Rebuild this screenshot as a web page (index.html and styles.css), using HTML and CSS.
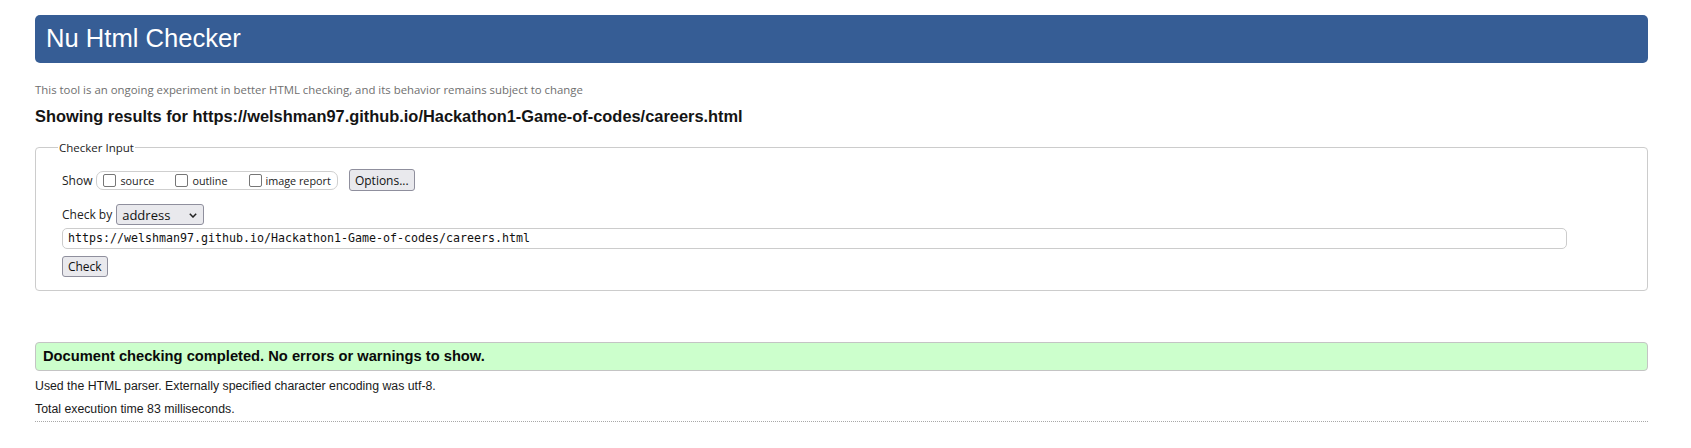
FILE: index.html
```html
<!DOCTYPE html>
<html lang="en">
<head>
<meta charset="utf-8">
<title>Nu Html Checker</title>
<link rel="stylesheet" href="styles.css">
</head>
<body>
<h1 class="banner">Nu Html Checker</h1>
<p class="tagline">This tool is an ongoing experiment in better HTML checking, and its behavior remains subject to change</p>
<h2 class="showing">Showing results for https://welshman97.github.io/Hackathon1-Game-of-codes/careers.html</h2>
<form class="checker">
  <fieldset class="checker-input">
    <legend class="legend">Checker Input</legend>
    <div class="row show-row">
      <span class="label">Show</span>
      <span class="group">
        <label class="opt"><span class="box"></span>source</label>
        <label class="opt"><span class="box"></span>outline</label>
        <label class="opt"><span class="box"></span>image report</label>
      </span>
      <button type="button" class="btn options">Options...</button>
    </div>
    <div class="row by-row">
      <span class="label">Check by</span>
      <span class="select">address
        <svg class="chev" width="8" height="5" viewBox="0 0 8 5"><path d="M0.8 0.8 L4 4 L7.2 0.8" fill="none" stroke="#222" stroke-width="1.5"/></svg>
      </span>
    </div>
    <div class="url">https://welshman97.github.io/Hackathon1-Game-of-codes/careers.html</div>
    <div class="row check-row">
      <button type="button" class="btn check">Check</button>
    </div>
  </fieldset>
</form>
<p class="success">Document checking completed. No errors or warnings to show.</p>
<p class="details first">Used the HTML parser. Externally specified character encoding was utf-8.</p>
<p class="details">Total execution time 83 milliseconds.</p>
<hr class="dots">
</body>
</html>
```
FILE: styles.css
```css
html, body {
  background: #fff;
}
body {
  margin: 0;
  padding: 15px 43px 0 35px;
  font-family: "Liberation Sans", Arial, sans-serif;
  color: #1a1a1a;
}
.banner {
  margin: 0;
  height: 48px;
  line-height: 46px;
  padding-left: 11px;
  background: #365d95;
  color: #fff;
  font-weight: normal;
  font-size: 25.6px;
  border-radius: 5px;
}
.tagline {
  margin: 19px 0 0;
  font-family: "Open Sans", "Noto Sans", sans-serif;
  font-size: 11.4px;
  line-height: 16px;
  color: #6f6f6f;
}
.showing {
  margin: 8px 0 0;
  font-size: 16.4px;
  line-height: 21px;
  font-weight: bold;
  color: #141414;
}
.checker {
  margin: 12.7px 0 0;
}
.checker-input {
  margin: 0;
  border: 1px solid #cccccc;
  border-radius: 4px;
  padding: 13.5px 26px 13px 26px;
  font-family: "Open Sans", "Noto Sans", sans-serif;
  font-size: 12px;
  color: #222;
}
.legend {
  padding: 0 1px;
  margin-left: -4px;
  font-size: 11.5px;
  line-height: 16px;
  color: #222;
}
.row {
  display: flex;
  align-items: center;
}
.show-row {
  height: 22px;
}
.label {
  margin-right: 4px;
}
.group {
  display: flex;
  align-items: center;
  height: 17px;
  border: 1px solid #cfcfcf;
  border-radius: 7px;
  padding: 0 6px;
  gap: 21px;
}
.opt {
  display: flex;
  align-items: center;
  font-size: 10.8px;
}
.box {
  display: inline-block;
  width: 11px;
  height: 11px;
  border: 1px solid #767676;
  border-radius: 2px;
  margin-right: 4px;
  background: #fff;
}
.btn {
  font-family: "Open Sans", "Noto Sans", sans-serif;
  font-size: 12px;
  color: #111;
  background: #e9e9ed;
  border: 1px solid #8f8f9d;
  border-radius: 3px;
  padding: 0 5px;
  height: 22px;
}
.options {
  margin-left: 11px;
  width: 66px;
  padding: 0;
}
.by-row {
  margin-top: 12.8px;
  height: 21.5px;
}
.select {
  position: relative;
  display: flex;
  align-items: center;
  box-sizing: border-box;
  width: 88px;
  height: 21.5px;
  padding-left: 5px;
  background: #e9e9ed;
  border: 1px solid #8f8f9d;
  border-radius: 3px;
  font-size: 13px;
  color: #111;
}
.chev {
  position: absolute;
  right: 6px;
  top: 8px;
}
.url {
  margin-top: 3px;
  box-sizing: border-box;
  width: 1505px;
  height: 20.5px;
  line-height: 18.5px;
  padding-left: 5px;
  border: 1px solid #cccccc;
  border-radius: 5px;
  font-family: "DejaVu Sans Mono", "Liberation Mono", monospace;
  font-size: 11.63px;
  color: #111;
}
.check-row {
  margin-top: 7.2px;
}
.check {
  width: 45.5px;
  height: 21px;
  padding: 0;
}
.success {
  margin: 50.6px 0 0;
  box-sizing: border-box;
  height: 29px;
  line-height: 27px;
  padding-left: 7px;
  background: #ccffcc;
  border: 1px solid #c4c4c4;
  border-radius: 4px;
  font-weight: bold;
  font-size: 14.7px;
  color: #0a0a0a;
}
.details {
  margin: 0;
  font-size: 12.3px;
  line-height: 22.5px;
  color: #1a1a1a;
}
.details.first {
  margin-top: 4.5px;
}
.dots {
  margin: 1px 0 0;
  border: 0;
  border-top: 1px dotted #a8a8a8;
  height: 0;
}
```
